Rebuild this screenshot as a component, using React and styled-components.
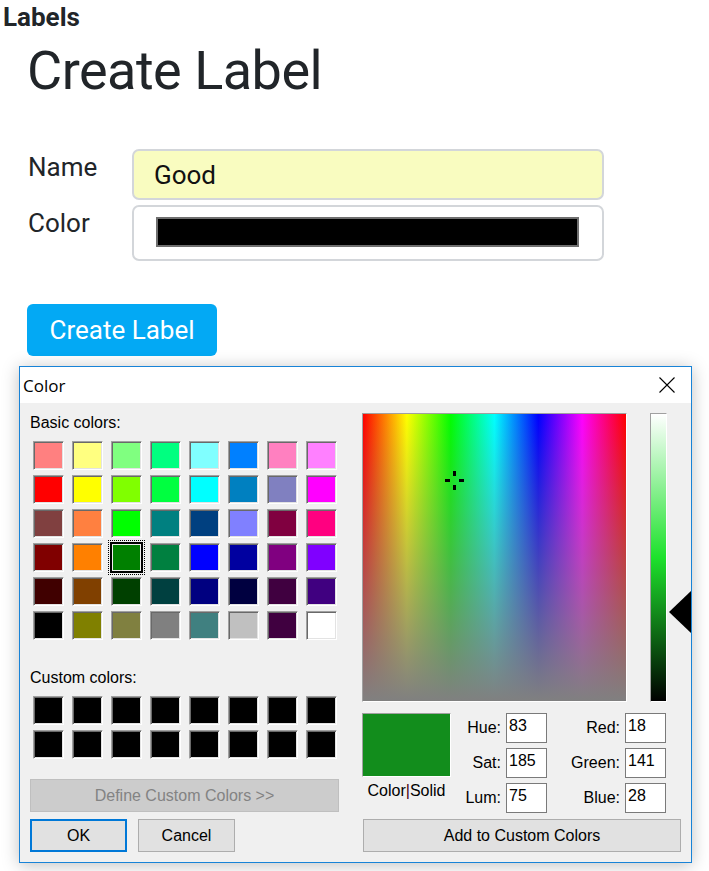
import React from 'react';
import styled, { createGlobalStyle } from 'styled-components';

const GlobalStyle = createGlobalStyle`
  body {
    margin: 0;
    background: #fff;
    font-family: Roboto, "Liberation Sans", Arial, sans-serif;
    color: #212529;
  }
`;

const BASIC_COLORS = [
  '#FF8080', '#FFFF80', '#80FF80', '#00FF80', '#80FFFF', '#0080FF', '#FF80C0', '#FF80FF',
  '#FF0000', '#FFFF00', '#80FF00', '#00FF40', '#00FFFF', '#0080C0', '#8080C0', '#FF00FF',
  '#804040', '#FF8040', '#00FF00', '#008080', '#004080', '#8080FF', '#800040', '#FF0080',
  '#800000', '#FF8000', '#008000', '#008040', '#0000FF', '#0000A0', '#800080', '#8000FF',
  '#400000', '#804000', '#004000', '#004040', '#000080', '#000040', '#400040', '#400080',
  '#000000', '#808000', '#808040', '#808080', '#408080', '#C0C0C0', '#400040', '#FFFFFF',
];

const SELECTED_INDEX = 26;
const CUSTOM_COLORS = Array.from({ length: 16 }, () => '#000000');

const current = { hue: 83, sat: 185, lum: 75, red: 18, green: 141, blue: 28 };

const Page = styled.div`
  width: 709px;
  min-height: 871px;
  overflow: hidden;
`;

const PageTitle = styled.div`
  padding: 2px 3px 0;
  font-size: 26px;
  font-weight: 700;
  line-height: 30px;
  color: #212529;
`;

const Content = styled.main`
  padding-left: 27px;
`;

const Heading = styled.h1`
  margin: 6px 0 0;
  font-size: 54px;
  font-weight: 400;
  letter-spacing: -0.5px;
  line-height: 66px;
  color: #212529;
`;

const Form = styled.div`
  display: grid;
  grid-template-columns: 105px 472px;
  row-gap: 5px;
  align-items: start;
  margin-top: 45px;
`;

const FieldLabel = styled.label`
  margin-top: -1px;
  padding-left: 1px;
  font-size: 26px;
  line-height: 39px;
  color: #212529;
`;

const TextInput = styled.input`
  box-sizing: border-box;
  width: 100%;
  height: 51px;
  margin: 0;
  padding: 0 20px;
  border: 2px solid #d3d6da;
  border-radius: 7px;
  background: #f9fcc0;
  font: 26px Roboto, sans-serif;
  color: #111;
  outline: none;
`;

const ColorField = styled.div`
  box-sizing: border-box;
  height: 56px;
  padding: 10px 23px 12px 22px;
  border: 2px solid #d3d6da;
  border-radius: 7px;
  background: #fff;
`;

const ColorBar = styled.div`
  box-sizing: border-box;
  height: 30px;
  border: 2px solid #6f6f6f;
  background: ${(p) => p.$color};
`;

const PrimaryButton = styled.button`
  display: block;
  box-sizing: border-box;
  width: 190px;
  height: 52px;
  margin: 43px 0 0;
  padding: 0 20px;
  border: none;
  border-radius: 6px;
  background: #03a9f4;
  color: #fff;
  font: 26px Roboto, sans-serif;
`;

/* ---- Windows colour dialog ---- */

const Dialog = styled.section`
  box-sizing: border-box;
  width: 673px;
  margin: 10px 0 0 19px;
  border: 1px solid #1883d7;
  background: #f0f0f0;
  box-shadow: 0 2px 16px rgba(0, 0, 0, 0.25);
  font-family: "Liberation Sans", Arial, sans-serif;
  color: #000;
`;

const TitleBar = styled.header`
  display: flex;
  align-items: center;
  justify-content: space-between;
  height: 36px;
  padding: 0 16px 0 3px;
  background: #fff;
  font-family: "Open Sans", "Noto Sans", sans-serif;
  font-size: 17px;
`;

const DialogBody = styled.div`
  box-sizing: border-box;
  display: grid;
  grid-template-columns: 309px 329px;
  column-gap: 23px;
  height: 459px;
  padding: 10px 0 10px 10px;
`;

const Column = styled.div`
  display: flex;
  flex-direction: column;
`;

const SectionLabel = styled.div`
  margin-top: ${(p) => p.$gap || 0}px;
  font-size: 16px;
  line-height: 20px;
`;

const SwatchGrid = styled.div`
  display: grid;
  grid-template-columns: repeat(8, 31px);
  grid-auto-rows: 29px;
  column-gap: 8px;
  row-gap: 5px;
  margin: 8px 0 0 3px;
`;

const Swatch = styled.div`
  box-sizing: border-box;
  background: ${(p) => p.$color};
  border: 1px solid;
  border-color: #a0a0a0 #fff #fff #a0a0a0;
  box-shadow: inset 1px 1px 0 #696969, inset -1px -1px 0 #e3e3e3;

  ${(p) =>
    p.$selected &&
    `
    margin: -1px;
    border: 2px solid #000;
    box-shadow: inset 0 0 0 1px #f0f0f0;
    outline: 1px dotted #000;
    outline-offset: 1px;
  `}
`;

const WinButton = styled.button`
  box-sizing: border-box;
  width: ${(p) => p.$width}px;
  height: 33px;
  margin: 0;
  padding: 0;
  border: ${(p) => (p.$default ? '2px solid #0078d7' : '1px solid #adadad')};
  background: #e1e1e1;
  font-family: "Liberation Sans", Arial, sans-serif;
  font-size: 16px;
  color: #000;
`;

const DisabledButton = styled(WinButton)`
  margin-top: 20px;
  border-color: #bfbfbf;
  background: #cccccc;
  color: #838383;
`;

const ButtonRow = styled.div`
  display: flex;
  gap: 11px;
  margin-top: 7px;
`;

const PickerRow = styled.div`
  display: flex;
  height: 289px;
`;

const sunken = `
  box-sizing: border-box;
  border: 1px solid;
  border-color: #a0a0a0 #fff #fff #a0a0a0;
`;

const Spectrum = styled.div`
  ${sunken}
  position: relative;
  width: 265px;
  background:
    linear-gradient(to bottom, rgba(128, 128, 128, 0), rgb(128, 128, 128)),
    linear-gradient(to right, #f00, #ff0 16.67%, #0f0 33.33%, #0ff 50%, #00f 66.67%, #f0f 83.33%, #f00);
`;

const Crosshair = styled.svg`
  position: absolute;
  width: 21px;
  height: 21px;
  margin: -10px 0 0 -10px;
`;

const LumTrack = styled.div`
  position: relative;
  width: 41px;
  margin-left: 23px;
`;

const LumBar = styled.div`
  ${sunken}
  width: 17px;
  height: 100%;
  background: linear-gradient(to bottom, #fff, ${(p) => p.$mid}, #000);
`;

const LumArrow = styled.div`
  position: absolute;
  left: 19px;
  width: 0;
  height: 0;
  margin-top: -21px;
  border-top: 21px solid transparent;
  border-bottom: 21px solid transparent;
  border-right: 22px solid #000;
`;

const ValuesGrid = styled.div`
  display: grid;
  grid-template-columns: 89px 45px 41px 68px 41px;
  grid-template-rows: repeat(3, 30px);
  column-gap: 5px;
  row-gap: 5px;
  margin-top: 11px;
  font-size: 16px;
`;

const Preview = styled.div`
  ${sunken}
  grid-column: 1;
  grid-row: 1 / span 2;
  height: 64px;
  background: ${(p) => p.$color};
`;

const PreviewCaption = styled.div`
  grid-column: 1;
  grid-row: 3;
  align-self: start;
  margin-top: -2px;
  text-align: center;
  line-height: 20px;
`;

const Divider = styled.span`
  color: #4b0010;
`;

const ValueName = styled.label`
  align-self: center;
  text-align: right;
  white-space: nowrap;
`;

const ValueInput = styled.input`
  box-sizing: border-box;
  width: 41px;
  height: 30px;
  margin: 0;
  padding: 0 2px 4px;
  border: 1px solid #7a7a7a;
  background: #fff;
  font-family: "Liberation Sans", Arial, sans-serif;
  font-size: 16px;
  color: #000;
  outline: none;
`;

const AddButton = styled(WinButton)`
  margin: 6px 0 0 1px;
`;

const CloseIcon = () => (
  <svg width="16" height="16" viewBox="0 0 16 16">
    <path d="M0.5 0.5 L15.5 15.5 M15.5 0.5 L0.5 15.5" stroke="#000" strokeWidth="1.1" fill="none" />
  </svg>
);

function hslToCss(hue, sat, lum) {
  return `hsl(${(hue / 240) * 360}, ${(sat / 240) * 100}%, ${(lum / 240) * 100}%)`;
}

const App = () => {
  const rgb = `rgb(${current.red}, ${current.green}, ${current.blue})`;
  const values = [
    ['Hue:', current.hue, 'Red:', current.red],
    ['Sat:', current.sat, 'Green:', current.green],
    ['Lum:', current.lum, 'Blue:', current.blue],
  ];

  return (
    <Page>
      <GlobalStyle />
      <PageTitle>Labels</PageTitle>
      <Content>
        <Heading>Create Label</Heading>
        <Form>
          <FieldLabel>Name</FieldLabel>
          <TextInput defaultValue="Good" />
          <FieldLabel>Color</FieldLabel>
          <ColorField>
            <ColorBar $color="#000" />
          </ColorField>
        </Form>
        <PrimaryButton>Create Label</PrimaryButton>
      </Content>

      <Dialog>
        <TitleBar>
          <span>Color</span>
          <CloseIcon />
        </TitleBar>
        <DialogBody>
          <Column>
            <SectionLabel>Basic colors:</SectionLabel>
            <SwatchGrid>
              {BASIC_COLORS.map((c, i) => (
                <Swatch key={i} $color={c} $selected={i === SELECTED_INDEX} />
              ))}
            </SwatchGrid>
            <SectionLabel $gap={28}>Custom colors:</SectionLabel>
            <SwatchGrid>
              {CUSTOM_COLORS.map((c, i) => (
                <Swatch key={i} $color={c} />
              ))}
            </SwatchGrid>
            <DisabledButton $width={309} disabled>
              Define Custom Colors &gt;&gt;
            </DisabledButton>
            <ButtonRow>
              <WinButton $width={97} $default>OK</WinButton>
              <WinButton $width={97}>Cancel</WinButton>
            </ButtonRow>
          </Column>

          <Column>
            <PickerRow>
              <Spectrum>
                <Crosshair
                  viewBox="0 0 21 21"
                  shapeRendering="crispEdges"
                  style={{
                    left: `${(current.hue / 239) * 100}%`,
                    top: `${(1 - current.sat / 240) * 100}%`,
                  }}
                >
                  <rect x="9" y="1" width="3" height="5" />
                  <rect x="9" y="15" width="3" height="5" />
                  <rect x="1" y="9" width="5" height="3" />
                  <rect x="15" y="9" width="5" height="3" />
                </Crosshair>
              </Spectrum>
              <LumTrack>
                <LumBar $mid={hslToCss(current.hue, current.sat, 120)} />
                <LumArrow style={{ top: `${(1 - current.lum / 240) * 100}%` }} />
              </LumTrack>
            </PickerRow>

            <ValuesGrid>
              <Preview $color={rgb} />
              <PreviewCaption>
                Color<Divider>|</Divider>Solid
              </PreviewCaption>
              {values.map(([a, av, b, bv], row) => (
                <React.Fragment key={a}>
                  <ValueName style={{ gridRow: row + 1, gridColumn: 2 }}>{a}</ValueName>
                  <ValueInput style={{ gridRow: row + 1, gridColumn: 3 }} defaultValue={av} />
                  <ValueName style={{ gridRow: row + 1, gridColumn: 4 }}>{b}</ValueName>
                  <ValueInput style={{ gridRow: row + 1, gridColumn: 5 }} defaultValue={bv} />
                </React.Fragment>
              ))}
            </ValuesGrid>
            <AddButton $width={318}>Add to Custom Colors</AddButton>
          </Column>
        </DialogBody>
      </Dialog>
    </Page>
  );
};

export default App;
